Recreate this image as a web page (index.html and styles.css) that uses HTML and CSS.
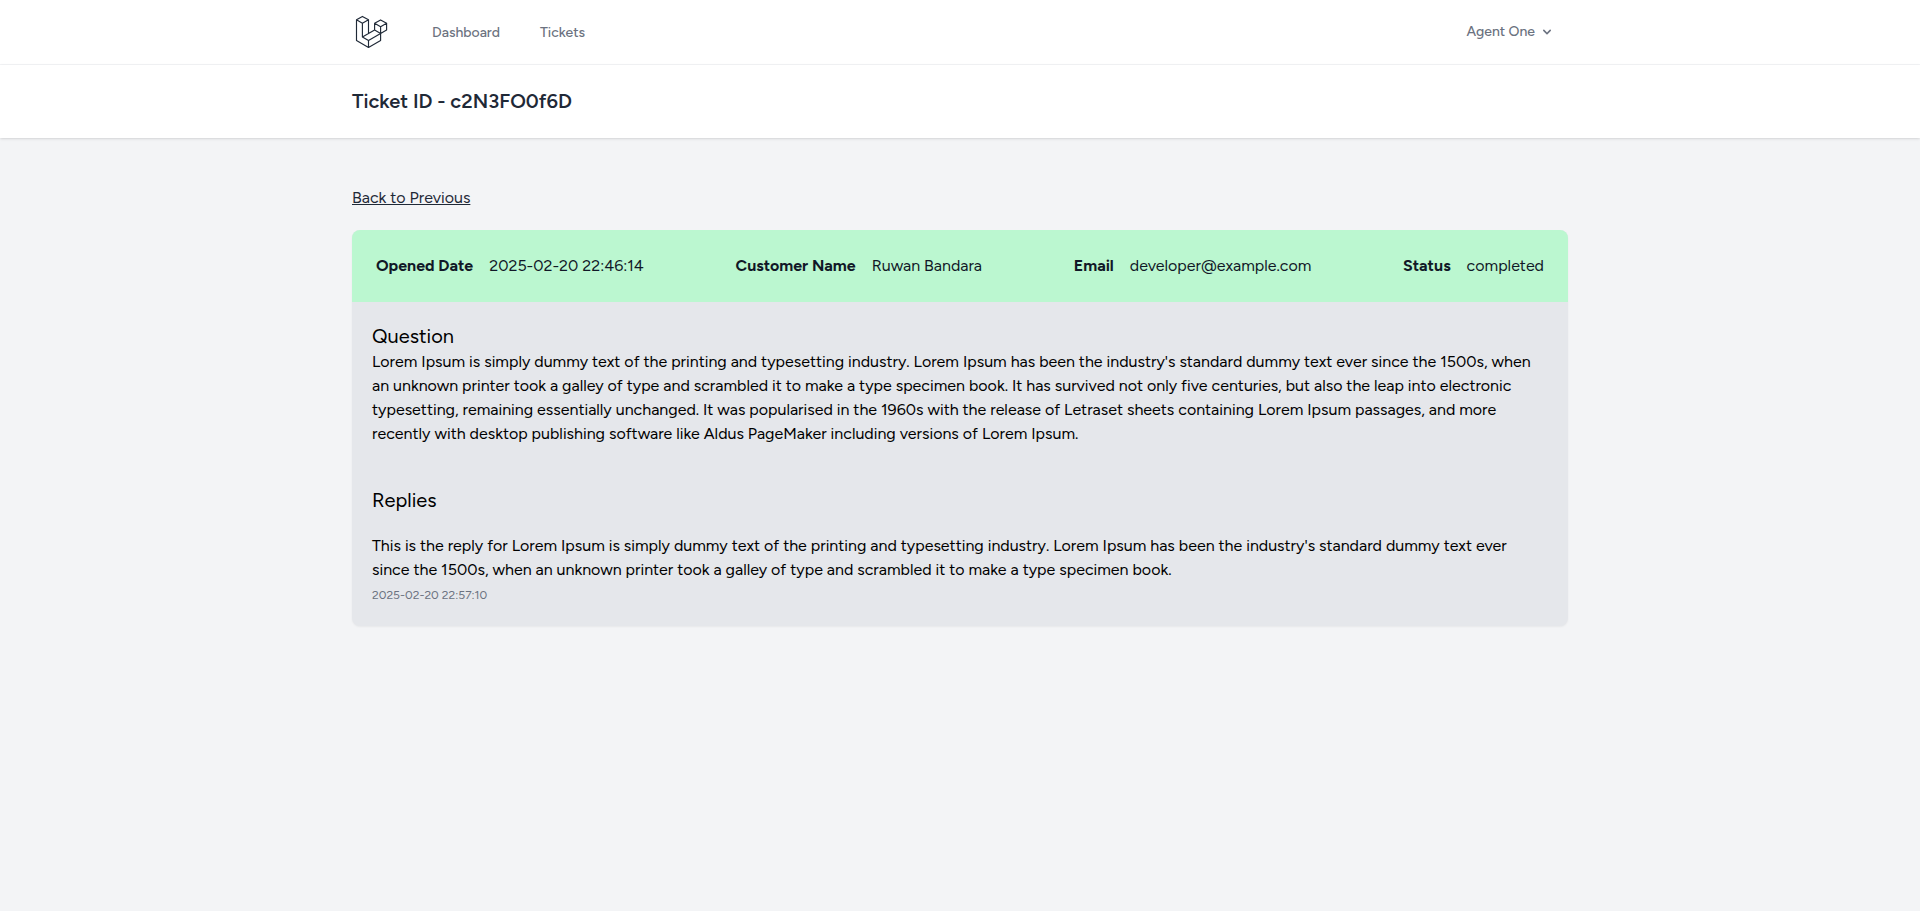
FILE: index.html
```
<!DOCTYPE html>
<html lang="en">
<head>
  <meta charset="utf-8">
  <title>Ticket ID - c2N3FO0f6D</title>
  <link rel="stylesheet" href="styles.css">
</head>
<body>
  <nav class="nav">
    <div class="container nav-inner">
      <a class="logo" href="#" aria-label="Home">
        <svg width="36" height="36" viewBox="0 0 36 36" fill="none" stroke="currentColor" stroke-width="1.15" stroke-linejoin="round">
          <path d="M4.5 5.8 10.4 2.4 16.5 5.8 10.4 9.2ZM4.5 5.8V26.6L16.5 33.5 28.6 26.6V19.5M10.4 9.2V22.9L16.5 26.4V33.5M16.5 5.8V19.4M10.4 22.9 22.6 16.1M16.5 26.4 28.6 19.5"/>
          <path d="M22.6 9.3 28.6 5.9 34.6 9.3 28.6 12.7ZM22.6 9.3V16.1L28.6 19.5 34.6 16.1V9.3M28.6 12.7V19.5"/>
        </svg>
      </a>
      <div class="nav-links">
        <a class="nav-link" href="#">Dashboard</a>
        <a class="nav-link" href="#">Tickets</a>
      </div>
      <button class="user-menu" type="button">
        <span>Agent One</span>
        <svg width="16" height="16" viewBox="0 0 20 20" fill="currentColor"><path fill-rule="evenodd" clip-rule="evenodd" d="M5.293 7.293a1 1 0 011.414 0L10 10.586l3.293-3.293a1 1 0 111.414 1.414l-4 4a1 1 0 01-1.414 0l-4-4a1 1 0 010-1.414z"/></svg>
      </button>
    </div>
  </nav>

  <header class="page-header">
    <div class="container">
      <h2 class="page-title">Ticket ID - c2N3FO0f6D</h2>
    </div>
  </header>

  <main class="container main">
    <a class="back-link" href="#">Back to Previous</a>

    <article class="ticket">
      <dl class="summary">
        <div class="field"><dt>Opened Date</dt><dd>2025-02-20 22:46:14</dd></div>
        <div class="field"><dt>Customer Name</dt><dd>Ruwan Bandara</dd></div>
        <div class="field"><dt>Email</dt><dd>developer@example.com</dd></div>
        <div class="field"><dt>Status</dt><dd>completed</dd></div>
      </dl>
      <div class="ticket-body">
        <section>
          <h3 class="section-title">Question</h3>
          <p>Lorem Ipsum is simply dummy text of the printing and typesetting industry. Lorem Ipsum has been the industry's standard dummy text ever since the 1500s, when an unknown printer took a galley of type and scrambled it to make a type specimen book. It has survived not only five centuries, but also the leap into electronic typesetting, remaining essentially unchanged. It was popularised in the 1960s with the release of Letraset sheets containing Lorem Ipsum passages, and more recently with desktop publishing software like Aldus PageMaker including versions of Lorem Ipsum.</p>
        </section>
        <section class="replies">
          <h3 class="section-title">Replies</h3>
          <div class="reply">
            <p>This is the reply for Lorem Ipsum is simply dummy text of the printing and typesetting industry. Lorem Ipsum has been the industry's standard dummy text ever since the 1500s, when an unknown printer took a galley of type and scrambled it to make a type specimen book.</p>
            <time class="reply-time">2025-02-20 22:57:10</time>
          </div>
        </section>
      </div>
    </article>
  </main>
</body>
</html>
```
FILE: styles.css
```
*, *::before, *::after { box-sizing: border-box; }

body {
  margin: 0;
  min-height: 100vh;
  background: #f3f4f6;
  color: #000;
  font: 400 16px/24px Figtree, Lato, sans-serif;
}

h2, h3, p, dl, dd { margin: 0; font-weight: 400; }
a { color: inherit; text-decoration: none; }

.container { width: 1216px; margin: 0 auto; }

/* Navigation */
.nav { background: #fff; border-bottom: 1px solid #f3f4f6; }
.nav-inner { display: flex; align-items: center; height: 64px; color: #6b7280; font-size: 14px; line-height: 20px; font-weight: 500; }
.logo { display: flex; color: #1f2937; }
.nav-links { display: flex; gap: 32px; margin-left: 40px; }
.nav-link { padding: 1px 4px 0; white-space: nowrap; }
.user-menu {
  display: flex; align-items: center; gap: 4px; margin-left: auto; padding: 8px 12px;
  border: 1px solid transparent; background: #fff; color: inherit; font: inherit;
}

/* Page heading */
.page-header { position: relative; padding: 24px 0; background: #fff; box-shadow: 0 1px 3px rgba(0, 0, 0, .1), 0 1px 2px -1px rgba(0, 0, 0, .1); }
.page-title { color: #1f2937; font-size: 20px; line-height: 25px; font-weight: 600; }

/* Ticket */
.main { padding: 48px 0; }
.back-link { display: inline-block; color: #1f2937; text-decoration: underline; }
.ticket { margin-top: 20px; overflow: hidden; border-radius: 8px; background: #e5e7eb; box-shadow: 0 1px 2px rgba(0, 0, 0, .05); }
.summary { display: flex; justify-content: space-between; padding: 24px; background: #bbf7d0; color: #111827; }
.field { display: flex; gap: 16px; white-space: nowrap; }
.field dt { font-weight: 700; }

.ticket-body { padding: 20px; }
.section-title { font-size: 20px; line-height: 28px; }
.replies { margin-top: 40px; }
.reply { margin-top: 20px; }
.reply-time { color: #6b7280; font-size: 12px; line-height: 16px; }
```
